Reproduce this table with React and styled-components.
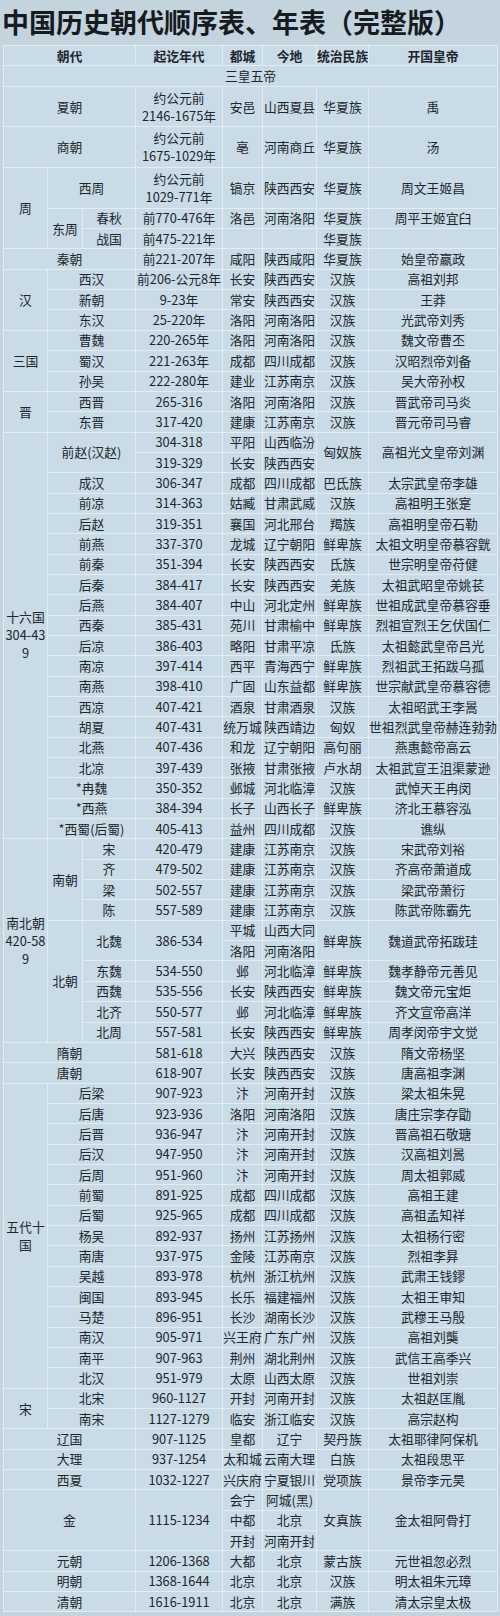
import React from "react";
import styled, { createGlobalStyle } from "styled-components";

const UNIT = 20.35;

const GlobalStyle = createGlobalStyle`
  html, body {
    margin: 0;
    padding: 0;
    background: #c3d4de;
  }
  body {
    font-family: "Noto Sans CJK SC", "Noto Sans", sans-serif;
    color: #1d262c;
  }
`;

const Page = styled.div`
  width: 500px;
  min-height: 1616px;
  background: #c3d4de;
`;

const Title = styled.h1`
  margin: 0;
  height: 45px;
  padding: 3px 0 0 2px;
  box-sizing: border-box;
  font-size: 27px;
  line-height: 38px;
  font-weight: 700;
  color: #161b1f;
  white-space: nowrap;
`;

const Table = styled.table`
  margin-left: 3px;
  width: 494px;
  table-layout: fixed;
  border-collapse: collapse;
  background: #c8dbe6;
`;

const Row = styled.tr`
  height: ${({ $h }) => UNIT * $h}px;
`;

const Cell = styled.td`
  border: 1px solid #e3ecf1;
  padding: 0;
  text-align: center;
  vertical-align: middle;
  font-size: 12.8px;
  line-height: 18px;
  font-weight: ${({ $bold }) => ($bold ? 700 : 400)};
  white-space: pre;
  overflow: visible;
`;

const widths = [44, 35, 53, 87, 40, 54, 52, 129];

// cell helper: text, colSpan, rowSpan
const c = (t, cs = 1, rs = 1) => ({ t, cs, rs });

const rows = [
  { bold: true, cells: [c("朝代", 3), "起讫年代", "都城", "今地", "统治民族", "开国皇帝"] },
  { cells: [c("三皇五帝", 8)] },
  { h: 2, cells: [c("夏朝", 3), "约公元前\n2146-1675年", "安邑", "山西夏县", "华夏族", "禹"] },
  { h: 2, cells: [c("商朝", 3), "约公元前\n1675-1029年", "亳", "河南商丘", "华夏族", "汤"] },
  { h: 2, cells: [c("周", 1, 3), c("西周", 2), "约公元前\n1029-771年", "镐京", "陕西西安", "华夏族", "周文王姬昌"] },
  { cells: [c("东周", 1, 2), "春秋", "前770-476年", "洛邑", "河南洛阳", "华夏族", "周平王姬宜臼"] },
  { cells: ["战国", "前475-221年", "", "", "华夏族", ""] },
  { cells: [c("秦朝", 3), "前221-207年", "咸阳", "陕西咸阳", "华夏族", "始皇帝嬴政"] },
  { cells: [c("汉", 1, 3), c("西汉", 2), "前206-公元8年", "长安", "陕西西安", "汉族", "高祖刘邦"] },
  { cells: [c("新朝", 2), "9-23年", "常安", "陕西西安", "汉族", "王莽"] },
  { cells: [c("东汉", 2), "25-220年", "洛阳", "河南洛阳", "汉族", "光武帝刘秀"] },
  { cells: [c("三国", 1, 3), c("曹魏", 2), "220-265年", "洛阳", "河南洛阳", "汉族", "魏文帝曹丕"] },
  { cells: [c("蜀汉", 2), "221-263年", "成都", "四川成都", "汉族", "汉昭烈帝刘备"] },
  { cells: [c("孙吴", 2), "222-280年", "建业", "江苏南京", "汉族", "吴大帝孙权"] },
  { cells: [c("晋", 1, 2), c("西晋", 2), "265-316", "洛阳", "河南洛阳", "汉族", "晋武帝司马炎"] },
  { cells: [c("东晋", 2), "317-420", "建康", "江苏南京", "汉族", "晋元帝司马睿"] },
  {
    cells: [
      c("十六国\n304-43\n9", 1, 20),
      c("前赵(汉赵)", 2, 2),
      "304-318",
      "平阳",
      "山西临汾",
      c("匈奴族", 1, 2),
      c("高祖光文皇帝刘渊", 1, 2),
    ],
  },
  { cells: ["319-329", "长安", "陕西西安"] },
  { cells: [c("成汉", 2), "306-347", "成都", "四川成都", "巴氐族", "太宗武皇帝李雄"] },
  { cells: [c("前凉", 2), "314-363", "姑臧", "甘肃武威", "汉族", "高祖明王张寔"] },
  { cells: [c("后赵", 2), "319-351", "襄国", "河北邢台", "羯族", "高祖明皇帝石勒"] },
  { cells: [c("前燕", 2), "337-370", "龙城", "辽宁朝阳", "鲜卑族", "太祖文明皇帝慕容皝"] },
  { cells: [c("前秦", 2), "351-394", "长安", "陕西西安", "氐族", "世宗明皇帝苻健"] },
  { cells: [c("后秦", 2), "384-417", "长安", "陕西西安", "羌族", "太祖武昭皇帝姚苌"] },
  { cells: [c("后燕", 2), "384-407", "中山", "河北定州", "鲜卑族", "世祖成武皇帝慕容垂"] },
  { cells: [c("西秦", 2), "385-431", "苑川", "甘肃榆中", "鲜卑族", "烈祖宣烈王乞伏国仁"] },
  { cells: [c("后凉", 2), "386-403", "略阳", "甘肃平凉", "氐族", "太祖懿武皇帝吕光"] },
  { cells: [c("南凉", 2), "397-414", "西平", "青海西宁", "鲜卑族", "烈祖武王拓跋乌孤"] },
  { cells: [c("南燕", 2), "398-410", "广固", "山东益都", "鲜卑族", "世宗献武皇帝慕容德"] },
  { cells: [c("西凉", 2), "407-421", "酒泉", "甘肃酒泉", "汉族", "太祖昭武王李暠"] },
  { cells: [c("胡夏", 2), "407-431", "统万城", "陕西靖边", "匈奴", "世祖烈武皇帝赫连勃勃"] },
  { cells: [c("北燕", 2), "407-436", "和龙", "辽宁朝阳", "高句丽", "燕惠懿帝高云"] },
  { cells: [c("北凉", 2), "397-439", "张掖", "甘肃张掖", "卢水胡", "太祖武宣王沮渠蒙逊"] },
  { cells: [c("*冉魏", 2), "350-352", "邺城", "河北临漳", "汉族", "武悼天王冉闵"] },
  { cells: [c("*西燕", 2), "384-394", "长子", "山西长子", "鲜卑族", "济北王慕容泓"] },
  { cells: [c("*西蜀(后蜀)", 2), "405-413", "益州", "四川成都", "汉族", "谯纵"] },
  {
    cells: [
      c("南北朝\n420-58\n9", 1, 10),
      c("南朝", 1, 4),
      "宋",
      "420-479",
      "建康",
      "江苏南京",
      "汉族",
      "宋武帝刘裕",
    ],
  },
  { cells: ["齐", "479-502", "建康", "江苏南京", "汉族", "齐高帝萧道成"] },
  { cells: ["梁", "502-557", "建康", "江苏南京", "汉族", "梁武帝萧衍"] },
  { cells: ["陈", "557-589", "建康", "江苏南京", "汉族", "陈武帝陈霸先"] },
  {
    cells: [
      c("北朝", 1, 6),
      c("北魏", 1, 2),
      c("386-534", 1, 2),
      "平城",
      "山西大同",
      c("鲜卑族", 1, 2),
      c("魏道武帝拓跋珪", 1, 2),
    ],
  },
  { cells: ["洛阳", "河南洛阳"] },
  { cells: ["东魏", "534-550", "邺", "河北临漳", "鲜卑族", "魏孝静帝元善见"] },
  { cells: ["西魏", "535-556", "长安", "陕西西安", "鲜卑族", "魏文帝元宝炬"] },
  { cells: ["北齐", "550-577", "邺", "河北临漳", "鲜卑族", "齐文宣帝高洋"] },
  { cells: ["北周", "557-581", "长安", "陕西西安", "鲜卑族", "周孝闵帝宇文觉"] },
  { cells: [c("隋朝", 3), "581-618", "大兴", "陕西西安", "汉族", "隋文帝杨坚"] },
  { cells: [c("唐朝", 3), "618-907", "长安", "陕西西安", "汉族", "唐高祖李渊"] },
  { cells: [c("五代十\n国", 1, 15), c("后梁", 2), "907-923", "汴", "河南开封", "汉族", "梁太祖朱晃"] },
  { cells: [c("后唐", 2), "923-936", "洛阳", "河南洛阳", "汉族", "唐庄宗李存勖"] },
  { cells: [c("后晋", 2), "936-947", "汴", "河南开封", "汉族", "晋高祖石敬瑭"] },
  { cells: [c("后汉", 2), "947-950", "汴", "河南开封", "汉族", "汉高祖刘暠"] },
  { cells: [c("后周", 2), "951-960", "汴", "河南开封", "汉族", "周太祖郭威"] },
  { cells: [c("前蜀", 2), "891-925", "成都", "四川成都", "汉族", "高祖王建"] },
  { cells: [c("后蜀", 2), "925-965", "成都", "四川成都", "汉族", "高祖孟知祥"] },
  { cells: [c("杨吴", 2), "892-937", "扬州", "江苏扬州", "汉族", "太祖杨行密"] },
  { cells: [c("南唐", 2), "937-975", "金陵", "江苏南京", "汉族", "烈祖李昪"] },
  { cells: [c("吴越", 2), "893-978", "杭州", "浙江杭州", "汉族", "武肃王钱鏐"] },
  { cells: [c("闽国", 2), "893-945", "长乐", "福建福州", "汉族", "太祖王审知"] },
  { cells: [c("马楚", 2), "896-951", "长沙", "湖南长沙", "汉族", "武穆王马殷"] },
  { cells: [c("南汉", 2), "905-971", "兴王府", "广东广州", "汉族", "高祖刘龑"] },
  { cells: [c("南平", 2), "907-963", "荆州", "湖北荆州", "汉族", "武信王高季兴"] },
  { cells: [c("北汉", 2), "951-979", "太原", "山西太原", "汉族", "世祖刘崇"] },
  { cells: [c("宋", 1, 2), c("北宋", 2), "960-1127", "开封", "河南开封", "汉族", "太祖赵匡胤"] },
  { cells: [c("南宋", 2), "1127-1279", "临安", "浙江临安", "汉族", "高宗赵构"] },
  { cells: [c("辽国", 3), "907-1125", "皇都", "辽宁", "契丹族", "太祖耶律阿保机"] },
  { cells: [c("大理", 3), "937-1254", "太和城", "云南大理", "白族", "太祖段思平"] },
  { cells: [c("西夏", 3), "1032-1227", "兴庆府", "宁夏银川", "党项族", "景帝李元昊"] },
  {
    cells: [
      c("金", 3, 3),
      c("1115-1234", 1, 3),
      "会宁",
      "阿城(黑)",
      c("女真族", 1, 3),
      c("金太祖阿骨打", 1, 3),
    ],
  },
  { cells: ["中都", "北京"] },
  { cells: ["开封", "河南开封"] },
  { cells: [c("元朝", 3), "1206-1368", "大都", "北京", "蒙古族", "元世祖忽必烈"] },
  { cells: [c("明朝", 3), "1368-1644", "北京", "北京", "汉族", "明太祖朱元璋"] },
  { cells: [c("清朝", 3), "1616-1911", "北京", "北京", "满族", "清太宗皇太极"] },
];

export default function App() {
  return (
    <Page>
      <GlobalStyle />
      <Title>中国历史朝代顺序表、年表（完整版）</Title>
      <Table>
        <colgroup>
          {widths.map((w, i) => (
            <col key={i} style={{ width: w }} />
          ))}
        </colgroup>
        <tbody>
          {rows.map((row, i) => (
            <Row key={i} $h={row.h || 1}>
              {row.cells.map((cell, j) => {
                const d = typeof cell === "string" ? c(cell) : cell;
                return (
                  <Cell key={j} colSpan={d.cs} rowSpan={d.rs} $bold={row.bold}>
                    {d.t}
                  </Cell>
                );
              })}
            </Row>
          ))}
        </tbody>
      </Table>
    </Page>
  );
}
